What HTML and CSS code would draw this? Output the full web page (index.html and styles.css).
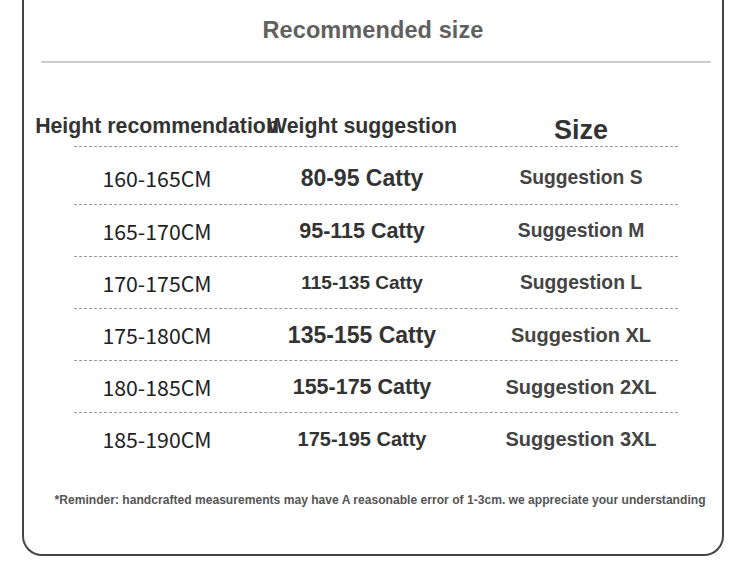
FILE: index.html
```html
<!DOCTYPE html>
<html lang="en">
<head>
<meta charset="utf-8">
<title>Recommended size</title>
<link rel="stylesheet" href="styles.css">
</head>
<body>
<div class="card">
  <h1 class="title">Recommended size</h1>
  <hr class="rule">
  <div class="table">
    <div class="head">
      <div class="hcell">Height recommendation</div>
      <div class="hcell">Weight suggestion</div>
      <div class="hcell hsize">Size</div>
    </div>
    <div class="rows">
      <div class="row"><span class="h">160-165CM</span><span class="w w-lg">80-95 Catty</span><span class="s s-sm">Suggestion S</span></div>
      <div class="row"><span class="h">165-170CM</span><span class="w w-md">95-115 Catty</span><span class="s s-sm">Suggestion M</span></div>
      <div class="row"><span class="h">170-175CM</span><span class="w w-sm">115-135 Catty</span><span class="s s-sm">Suggestion L</span></div>
      <div class="row"><span class="h">175-180CM</span><span class="w w-lg">135-155 Catty</span><span class="s">Suggestion XL</span></div>
      <div class="row"><span class="h">180-185CM</span><span class="w w-md">155-175 Catty</span><span class="s">Suggestion 2XL</span></div>
      <div class="row"><span class="h">185-190CM</span><span class="w w-xs">175-195 Catty</span><span class="s">Suggestion 3XL</span></div>
    </div>
  </div>
  <p class="note">*Reminder: handcrafted measurements may have A reasonable error of 1-3cm. we appreciate your understanding</p>
</div>
</body>
</html>
```
FILE: styles.css
```css
html, body {
  margin: 0;
  padding: 0;
  background: #ffffff;
}
body {
  font-family: "Liberation Sans", Arial, sans-serif;
  width: 750px;
  height: 586px;
  overflow: hidden;
}
.card {
  box-sizing: border-box;
  margin-left: 22px;
  width: 702px;
  height: 556px;
  border: 2px solid #444444;
  border-top: none;
  border-radius: 0 0 20px 20px;
  display: flex;
  flex-direction: column;
}
.title {
  margin: 19px 0 0 0;
  font-size: 23.5px;
  line-height: 22px;
  letter-spacing: 0.1px;
  font-weight: bold;
  color: #606060;
  text-align: center;
}
.rule {
  margin: 20px 11px 0 17px;
  border: none;
  height: 2px;
  background: #cccccc;
}
.table {
  margin: 0 44px 0 50px;
}
.head, .row {
  display: grid;
  grid-template-columns: 166px 244px 194px;
  justify-items: center;
}
.head {
  height: 83px;
  align-items: end;
  border-bottom: 1px dashed #9a9a9a;
}
.hcell {
  font-size: 21.3px;
  line-height: 21px;
  font-weight: bold;
  color: #333333;
  white-space: nowrap;
  padding-bottom: 9px;
}
.hsize {
  font-size: 27px;
  line-height: 27px;
  padding-bottom: 2px;
}
.rows {
  padding-top: 5px;
}
.row {
  box-sizing: border-box;
  height: 52px;
  align-items: center;
}
.row + .row {
  border-top: 1px dashed #9a9a9a;
}
.h {
  font-family: "Noto Sans CJK SC", "Noto Sans", sans-serif;
  font-size: 21.3px;
  line-height: 24px;
  color: #222222;
}
.w {
  font-weight: bold;
  color: #333333;
  line-height: 24px;
}
.w-lg { font-size: 23px; }
.w-md { font-size: 21.5px; }
.w-sm { font-size: 19px; }
.w-xs { font-size: 20px; }
.s {
  font-weight: bold;
  color: #444444;
  font-size: 20px;
  line-height: 24px;
}
.s-sm { font-size: 19.3px; }
.note {
  margin: 29px 0 0 14px;
  font-size: 12.1px;
  line-height: 14px;
  font-weight: bold;
  color: #555555;
  text-align: center;
  white-space: nowrap;
}
```
